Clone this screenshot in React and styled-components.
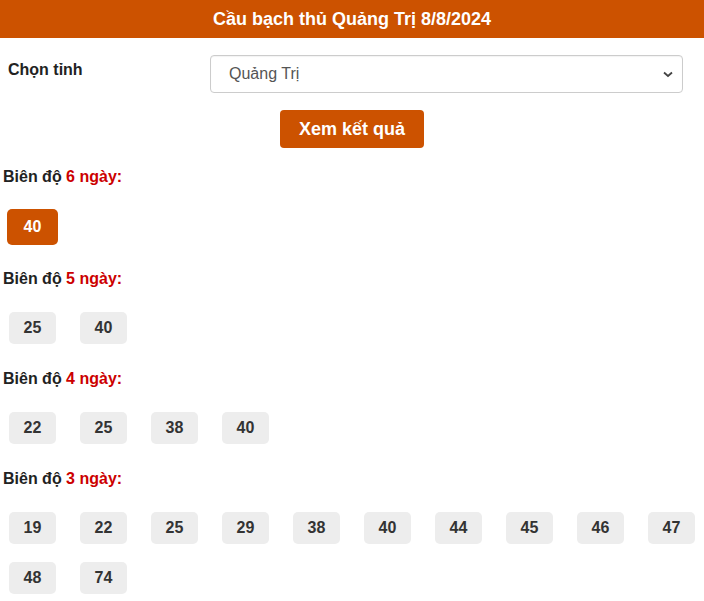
import React from "react";
import styled, { createGlobalStyle } from "styled-components";

const Global = createGlobalStyle`
  html, body { margin: 0; padding: 0; background: #fff; }
  body { font-family: "Liberation Sans", Arial, sans-serif; color: #333; }
`;

const Page = styled.div`
  width: 704px;
`;

const Header = styled.h1`
  margin: 0;
  height: 38px;
  background: #cc5200;
  color: #fff;
  font-size: 18px;
  font-weight: bold;
  display: flex;
  align-items: center;
  justify-content: center;
`;

const FormRow = styled.div`
  display: flex;
  align-items: center;
  padding: 17px 21px 0 8px;
`;

const Label = styled.label`
  width: 202px;
  font-size: 16px;
  font-weight: bold;
  color: #222;
  align-self: flex-start;
  padding-top: 6px;
`;

const SelectBox = styled.div`
  position: relative;
  flex: 1;
  height: 38px;
  box-sizing: border-box;
  border: 1px solid #ccc;
  border-radius: 4px;
  display: flex;
  align-items: center;
  padding-left: 18px;
  font-size: 16px;
  color: #555;
  box-shadow: inset 0 1px 1px rgba(0,0,0,0.05);
`;

const Chevron = styled.svg`
  position: absolute;
  right: 8px;
  top: 50%;
  transform: translateY(-50%);
`;

const ButtonRow = styled.div`
  display: flex;
  justify-content: center;
  padding-top: 17px;
`;

const Button = styled.button`
  width: 144px;
  height: 38px;
  background: #cc5200;
  color: #fff;
  border: none;
  border-radius: 4px;
  font-family: inherit;
  font-size: 18px;
  font-weight: bold;
`;

const Section = styled.div`
  padding: 0 0 0 3px;
`;

const Title = styled.div`
  font-size: 16px;
  font-weight: bold;
  color: #222;
  margin-top: ${p => p.$first ? "20px" : "26px"};
  line-height: 18px;
`;

const Red = styled.span`
  color: #cc0000;
`;

const Chips = styled.div`
  display: flex;
  flex-wrap: wrap;
  gap: 18px 24px;
  padding: 24px 0 0 6px;
`;

const Chip = styled.div`
  width: 47px;
  height: 32px;
  box-sizing: border-box;
  border-radius: 5px;
  background: ${p => p.$active ? "#cc5200" : "#ededed"};
  color: ${p => p.$active ? "#fff" : "#333"};
  display: flex;
  align-items: center;
  justify-content: center;
  font-size: 16px;
  font-weight: bold;
  ${p => p.$active && `
    width: 51px;
    height: 36px;
    margin: -1px 0 -1px -2px;
  `}
`;

const data = [
  { days: 6, nums: ["40"], active: true },
  { days: 5, nums: ["25", "40"] },
  { days: 4, nums: ["22", "25", "38", "40"] },
  { days: 3, nums: ["19", "22", "25", "29", "38", "40", "44", "45", "46", "47", "48", "74"] },
];

export default function App() {
  return (
    <Page>
      <Global />
      <Header>Cầu bạch thủ Quảng Trị 8/8/2024</Header>
      <FormRow>
        <Label>Chọn tỉnh</Label>
        <SelectBox>
          Quảng Trị
          <Chevron width="12" height="12" viewBox="0 0 12 12">
            <path d="M2 4.5 L6 8 L10 4.5" fill="none" stroke="#444" strokeWidth="1.8" />
          </Chevron>
        </SelectBox>
      </FormRow>
      <ButtonRow>
        <Button>Xem kết quả</Button>
      </ButtonRow>
      {data.map((s, i) => (
        <Section key={s.days}>
          <Title $first={i === 0}>
            Biên độ <Red>{s.days} ngày:</Red>
          </Title>
          <Chips>
            {s.nums.map(n => (
              <Chip key={n} $active={s.active}>{n}</Chip>
            ))}
          </Chips>
        </Section>
      ))}
    </Page>
  );
}
